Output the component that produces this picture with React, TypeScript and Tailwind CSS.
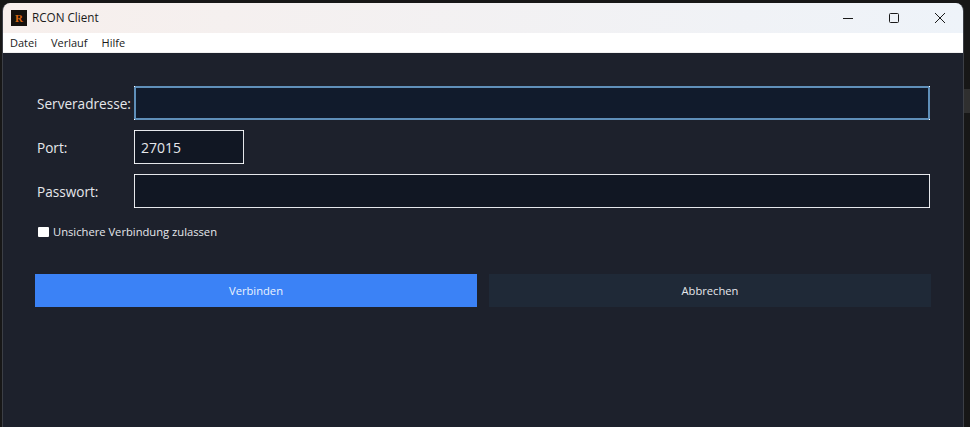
import React from "react";

const FONT = "font-['Open_Sans','Noto_Sans',sans-serif]";

const labelClass = "w-[99px] pl-[2px] pt-[2px] text-[13.6px] leading-none text-[#e5e7eb]";

// the input boxes in the shot have a single bright pixel on each corner
const Corners = () => (
  <>
    <span className="absolute top-0 left-0 w-px h-px bg-white" />
    <span className="absolute top-0 right-0 w-px h-px bg-white" />
    <span className="absolute bottom-0 left-0 w-px h-px bg-white" />
    <span className="absolute bottom-0 right-0 w-px h-px bg-white" />
  </>
);

const App: React.FC = () => {
  return (
    <div className={`${FONT} relative w-[970px] h-[427px] overflow-hidden bg-[#171717] pl-[2px] pt-[3px]`}>
      <div className="absolute top-[89px] right-0 w-[6px] h-[24px] bg-[#2f2f2f]" />
      <div className="flex flex-col w-[962px] h-[424px] rounded-t-lg overflow-hidden bg-[#1d212c] border-x border-[#3c3f46]">
        {/* title bar */}
        <div className="flex items-center h-[30px] shrink-0 bg-gradient-to-r from-[#f7efec] to-[#eef3f9]">
          <div className="flex items-center justify-center w-4 h-4 ml-2 bg-[#15110d]">
            <span className="text-[11px] leading-none font-bold text-[#d9660f] font-['Liberation_Serif',serif]">R</span>
          </div>
          <span className="ml-[5px] text-[11.7px] text-[#1a1a1a]">RCON Client</span>
          <div className="flex items-center ml-auto">
            <button className="flex items-center justify-center w-[46px] h-[30px]">
              <svg width="10" height="10" viewBox="0 0 10 10">
                <path d="M0 5.5h10" stroke="#1a1a1a" strokeWidth="1" fill="none" />
              </svg>
            </button>
            <button className="flex items-center justify-center w-[46px] h-[30px]">
              <svg width="10" height="10" viewBox="0 0 10 10">
                <rect x="0.5" y="0.5" width="9" height="9" rx="1" stroke="#1a1a1a" strokeWidth="1" fill="none" />
              </svg>
            </button>
            <button className="flex items-center justify-center w-[46px] h-[30px]">
              <svg width="10" height="10" viewBox="0 0 10 10">
                <path d="M0 0l10 10M10 0L0 10" stroke="#1a1a1a" strokeWidth="1" fill="none" />
              </svg>
            </button>
          </div>
        </div>

        {/* menu */}
        <div className="flex items-center gap-[14px] h-5 shrink-0 bg-white pl-[7px] pt-px text-[11px] text-[#1a1a1a] border-b border-[#f0f0f0]">
          <span>Datei</span>
          <span>Verlauf</span>
          <span>Hilfe</span>
        </div>

        {/* form */}
        <div className="flex flex-col flex-1 pt-[33px] pl-8 pr-8">
          <div className="flex items-center h-[34px] pr-px">
            <label className={labelClass}>Serveradresse:</label>
            <div className="relative flex-1 h-[34px]">
              <input className="w-full h-full bg-[#111b2c] border-2 border-[#5f8fb9] outline-none" />
              <Corners />
            </div>
          </div>
          <div className="flex items-center h-[34px] mt-[10px]">
            <label className={labelClass}>Port:</label>
            <div className="relative w-[110px] h-[34px]">
              <input
                defaultValue="27015"
                className="w-full h-full bg-[#111723] border border-[#e5e7eb] px-[6px] text-[14px] text-[#e5e7eb] outline-none"
              />
              <Corners />
            </div>
          </div>
          <div className="flex items-center h-[34px] mt-[10px] pr-px">
            <label className={labelClass}>Passwort:</label>
            <div className="relative flex-1 h-[34px]">
              <input
                type="password"
                className="w-full h-full bg-[#111723] border border-[#e5e7eb] outline-none"
              />
              <Corners />
            </div>
          </div>
          <label className="flex items-center mt-[18px] ml-[3px] h-[12px] text-[11.2px] text-[#e5e7eb]">
            <span className="w-[11px] h-[10px] bg-white rounded-[1px] mr-[4px]" />
            Unsichere Verbindung zulassen
          </label>
          <div className="flex gap-3 mt-[36px]">
            <button className="flex-1 h-[33px] pt-[2px] bg-[#3b82f6] text-[11.2px] text-[#eaf2ff]">Verbinden</button>
            <button className="flex-1 h-[33px] pt-[2px] bg-[#1f2937] text-[11.2px] text-[#e5e7eb]">Abbrechen</button>
          </div>
        </div>
      </div>
    </div>
  );
};

export default App;
